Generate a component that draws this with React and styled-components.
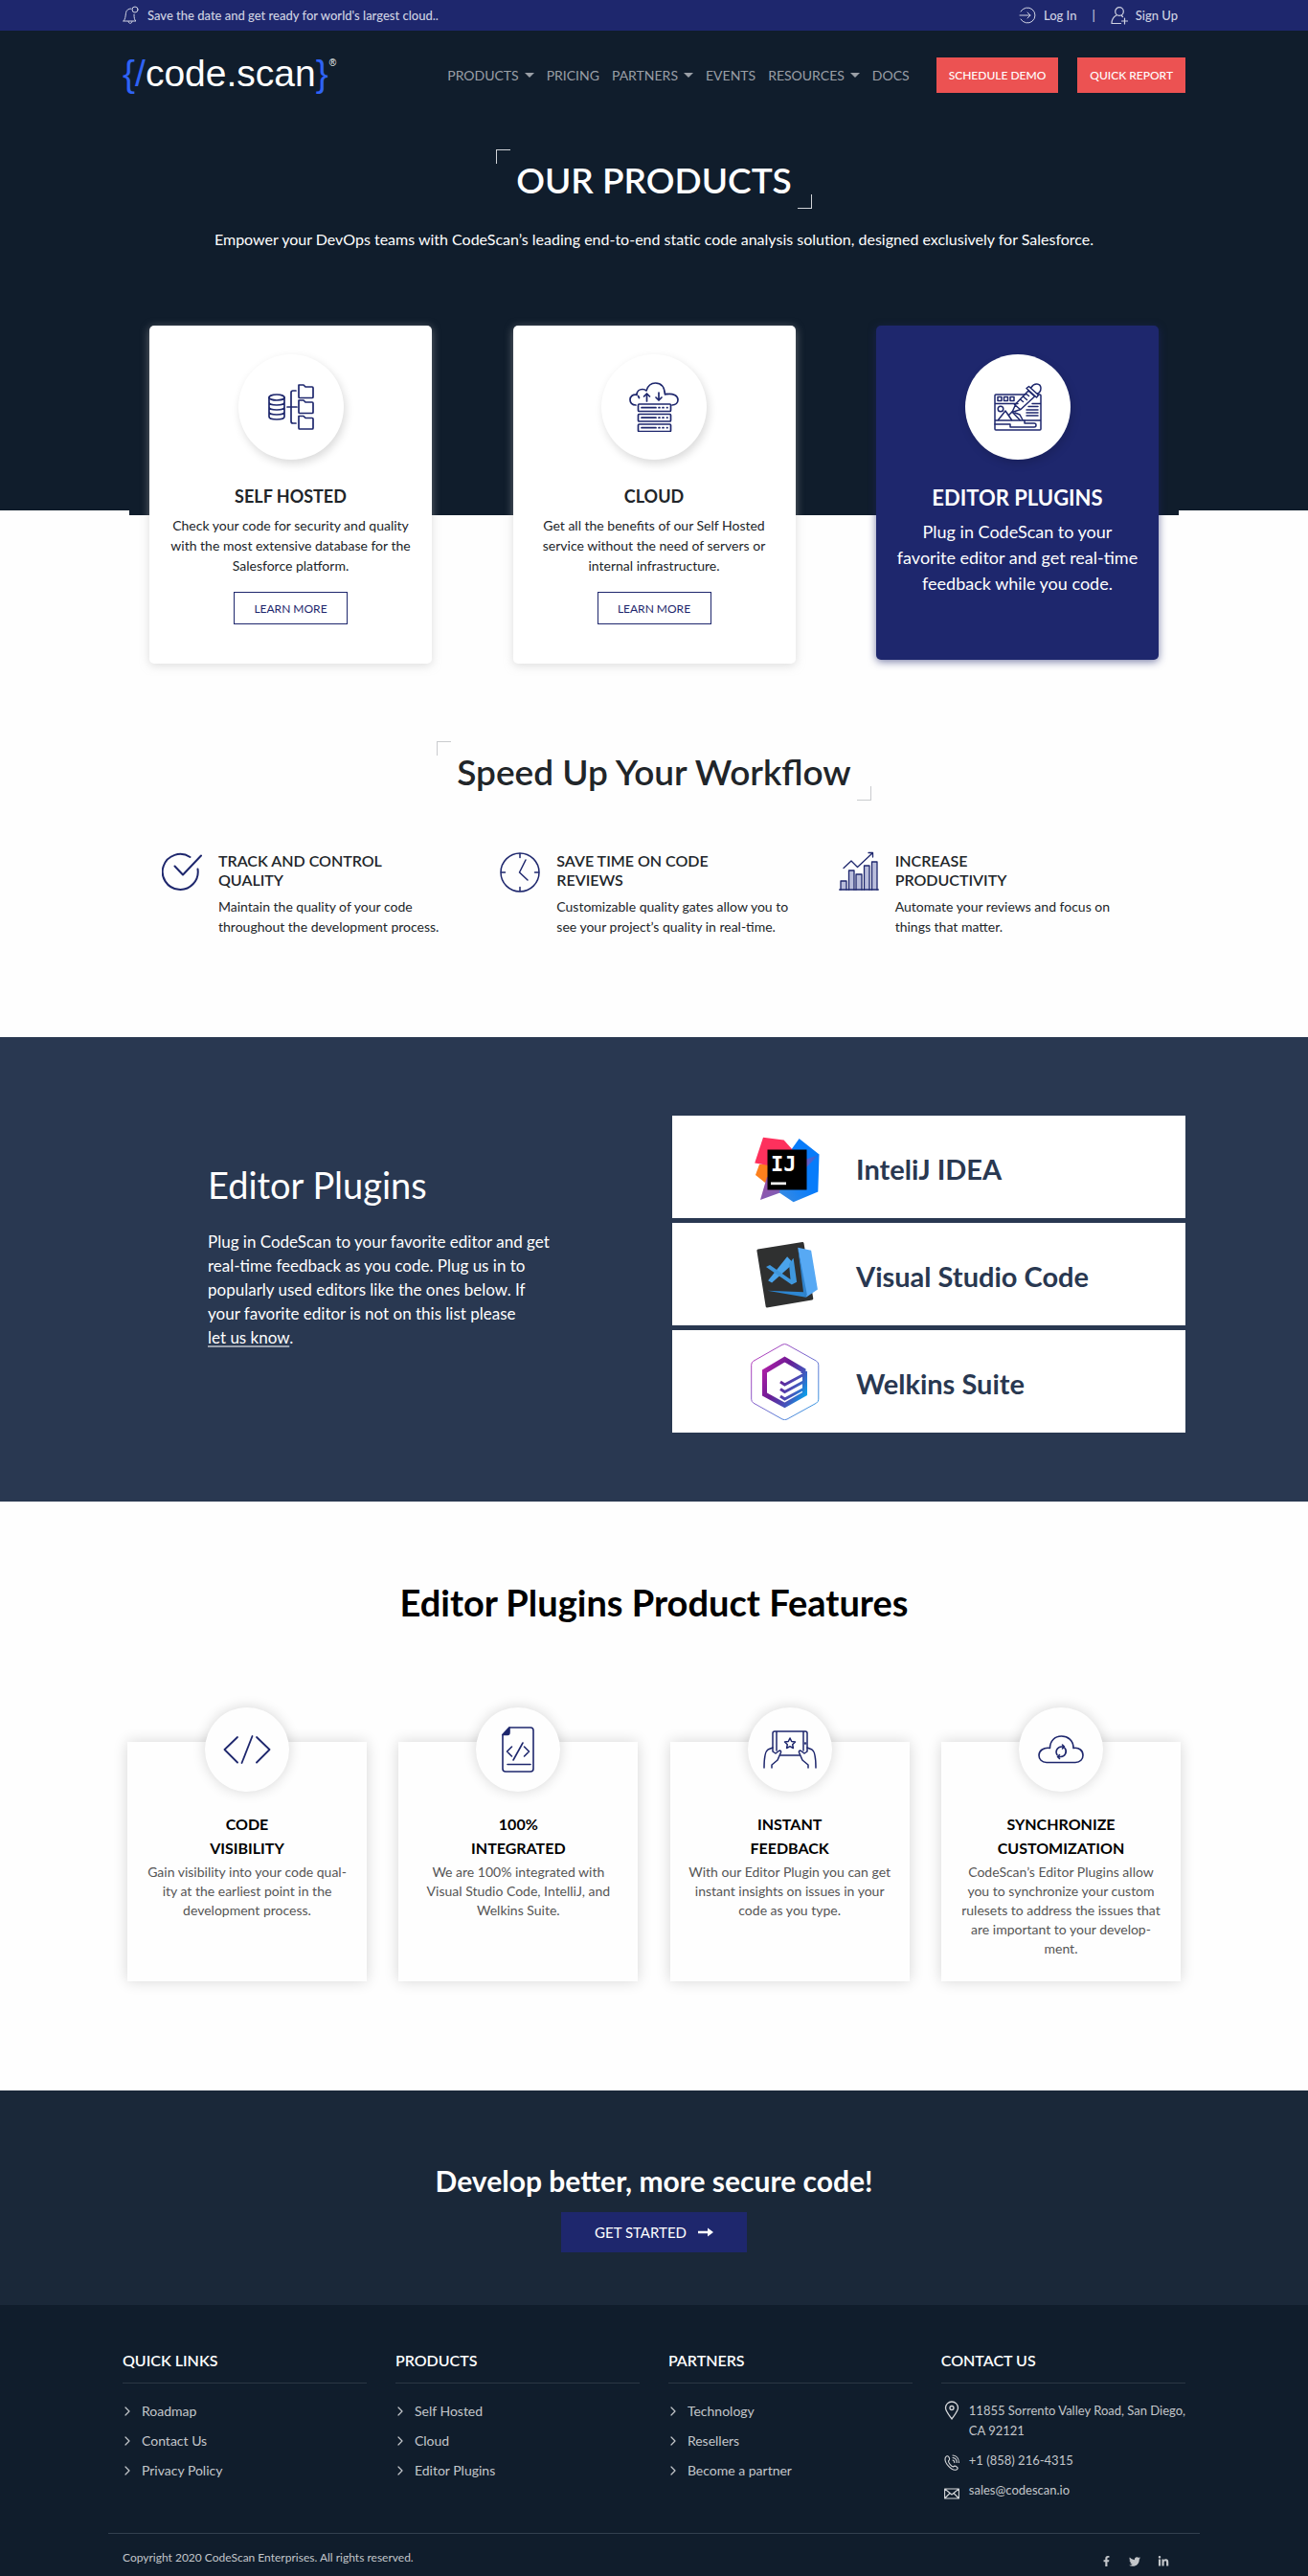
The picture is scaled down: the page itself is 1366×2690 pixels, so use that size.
import React from 'react';
import styled, { createGlobalStyle } from 'styled-components';
import { FaFacebookF, FaTwitter, FaLinkedinIn } from 'react-icons/fa';

const NAVY = '#101d2c';
const INDIGO = '#1e276d';
const SLATE = '#293851';

const GlobalStyle = createGlobalStyle`
  *, *::before, *::after { box-sizing: border-box; }
  body {
    margin: 0;
    background: #fefefe;
    color: #212529;
    font-family: Lato, "Open Sans", sans-serif;
    font-size: 14px;
    line-height: 21px;
  }
  h1, h2, h3, p, ul { margin: 0; padding: 0; }
  ul { list-style: none; }
  a { color: inherit; text-decoration: none; }
  button { font-family: inherit; cursor: pointer; border-radius: 0; }
  svg { display: block; flex: none; }
`;

const Container = styled.div`
  width: 100%;
  max-width: 1140px;
  margin: 0 auto;
  padding: 0 15px;
`;

/* ---------- top bar ---------- */

const TopBar = styled.div`
  background: ${INDIGO};
  color: #cfd2e2;
  font-size: 13px;
  font-weight: 500;
  line-height: 32px;
`;

const TopBarRow = styled(Container)`
  display: flex;
  justify-content: space-between;
`;

const Notice = styled.a`
  display: flex;
  align-items: center;
  gap: 9px;
`;

const Account = styled.div`
  display: flex;
  gap: 16px;
  padding-right: 8px;
`;

const AccountLink = styled.a`
  display: flex;
  align-items: center;
  gap: 8px;
`;

/* ---------- header ---------- */

const Hero = styled.header`
  background: ${NAVY};
  color: #fff;
`;

const HeaderRow = styled(Container)`
  display: flex;
  align-items: center;
  padding-top: 28px;
`;

const Logo = styled.a`
  display: flex;
  height: 37px;
  color: #fff;
  font: 39px/34px "Liberation Sans", Arial, sans-serif;
`;

const LogoMark = styled.span`
  color: #2f63f5;
`;

const Registered = styled.sup`
  padding-left: 1px;
  font-size: 10px;
  line-height: 12px;
`;

const Nav = styled.nav`
  display: flex;
  gap: 13px;
  margin-left: auto;
  padding-right: 28px;
  color: #9a9fa6;
`;

const NavLink = styled.a`
  display: flex;
  align-items: center;
  gap: 6px;

  ${({ $menu }) => $menu && `
    &::after {
      content: "";
      border: 5px solid transparent;
      border-top-color: currentColor;
      border-bottom: 0;
    }
  `}
`;

const HeaderActions = styled.div`
  display: flex;
  gap: 20px;
`;

const ActionButton = styled.button`
  height: 37px;
  padding: 0 13px;
  border: 0;
  background: #ec5252;
  color: #fff;
  font-size: 12px;
  font-weight: 500;
`;

/* ---------- headings ---------- */

const CenterRow = styled.div`
  display: flex;
  justify-content: center;
  padding-top: ${({ $top }) => $top}px;
`;

const BracketTitle = styled.h2`
  position: relative;
  padding: 9px 21px 7px;
  font-size: 37px;
  font-weight: 600;
  line-height: 46px;

  &::before, &::after {
    content: "";
    position: absolute;
    width: 15px;
    height: 15px;
    border: 0 solid ${({ $line }) => $line};
  }
  &::before { top: 0; left: 0; border-width: 1px 0 0 1px; }
  &::after { right: 0; bottom: 0; border-width: 0 1px 1px 0; }
`;

const Lead = styled.p`
  padding: 20px 15px 78px;
  font-size: 16px;
  line-height: 24px;
  text-align: center;
`;

/* ---------- product cards ---------- */

const CardBand = styled.section`
  background: linear-gradient(${NAVY} 193px, transparent 193px);
`;

const CardStrip = styled.div`
  max-width: 1096px;
  margin: 0 auto;
  padding: 0 21px;
  display: flex;
  justify-content: space-between;
  align-items: flex-start;
  background: linear-gradient(${NAVY} 198px, transparent 198px);
`;

const ProductCard = styled.article`
  display: flex;
  flex-direction: column;
  align-items: center;
  width: 295px;
  min-height: ${({ $active }) => ($active ? 349 : 353)}px;
  padding: 30px 20px;
  border-radius: 5px;
  background: ${({ $active }) => ($active ? INDIGO : '#fff')};
  color: ${({ $active }) => ($active ? '#fff' : '#212529')};
  box-shadow: ${({ $active }) => ($active ? '0 2px 8px rgba(30, 39, 109, 0.6)' : '0 2px 10px rgba(190, 190, 190, 0.5)')};
  text-align: center;
`;

const IconDisc = styled.div`
  display: grid;
  place-items: center;
  width: 110px;
  height: 110px;
  border-radius: 50%;
  background: #fff;
  box-shadow: 2px 4px 10px rgba(0, 0, 0, 0.15);
`;

const ProductTitle = styled.h3`
  margin: 26px 0 8px;
  font-size: ${({ $active }) => ($active ? 22 : 18)}px;
  font-weight: 700;
  line-height: ${({ $active }) => ($active ? 28 : 24)}px;
`;

const ProductText = styled.p`
  font-size: ${({ $active }) => ($active ? 18 : 14)}px;
  line-height: ${({ $active }) => ($active ? 27 : 21)}px;
`;

const LearnMore = styled.button`
  width: 119px;
  height: 34px;
  margin-top: 17px;
  border: 1px solid ${INDIGO};
  background: transparent;
  color: ${INDIGO};
  font-size: 12px;
`;

/* ---------- workflow ---------- */

const BenefitRow = styled.div`
  display: grid;
  grid-template-columns: repeat(3, 1fr);
  max-width: 1060px;
  margin: 0 auto;
  padding: 53px 0 105px;
`;

const Benefit = styled.article`
  display: flex;
  gap: 17px;
  padding: 0 16px;
`;

const BenefitTitle = styled.h3`
  margin-bottom: 7px;
  font-size: 16px;
  font-weight: 600;
  line-height: 20px;
`;

const BenefitText = styled.p`
  max-width: 250px;
`;

/* ---------- editor plugins ---------- */

const PluginSection = styled.section`
  padding: 82px 0 72px;
  background: ${SLATE};
  color: #fff;
`;

const PluginRow = styled(Container)`
  display: flex;
  justify-content: space-between;
`;

const PluginIntro = styled.div`
  width: 454px;
  padding: 49px 0 0 89px;
`;

const PluginTitle = styled.h2`
  margin-bottom: 24px;
  font-size: 38px;
  font-weight: 400;
  line-height: 46px;
`;

const PluginText = styled.p`
  font-size: 17px;
  line-height: 25px;
`;

const KnowLink = styled.a`
  text-decoration: underline 2px #9aa1ae;
  text-decoration-skip-ink: none;
  text-underline-offset: 2px;
`;

const NoWrap = styled.span`
  white-space: nowrap;
`;

const PluginList = styled.ul`
  display: grid;
  gap: 5px;
  width: 536px;
`;

const PluginItem = styled.li`
  display: flex;
  align-items: center;
  gap: 38px;
  height: 107px;
  padding-left: 82px;
  background: #fff;
  color: ${SLATE};
`;

const PluginName = styled.h3`
  padding-top: 4px;
  font-size: 29px;
  font-weight: 700;
  line-height: 36px;
`;

/* ---------- features ---------- */

const FeatureSection = styled.section`
  padding: 82px 0 114px;
`;

const FeatureHeading = styled.h2`
  color: #000;
  font-size: 38px;
  font-weight: 700;
  line-height: 46px;
  text-align: center;
`;

const FeatureRow = styled.div`
  display: flex;
  justify-content: space-between;
  max-width: 1100px;
  margin: 0 auto;
  padding-top: 123px;
`;

const FeatureCard = styled.article`
  display: flex;
  flex-direction: column;
  align-items: center;
  width: 250px;
  min-height: 250px;
  padding: 0 18px;
  background: #fefefe;
  box-shadow: 0 0 14px rgba(0, 0, 0, 0.16);
  text-align: center;
`;

const FeatureDisc = styled(IconDisc)`
  width: 88px;
  height: 88px;
  margin-top: -36px;
  background: #fefefe;
  box-shadow: 0 0 14px rgba(0, 0, 0, 0.16);
`;

const FeatureTitle = styled.h3`
  margin: 21px 0 3px;
  color: #000;
  font-size: 16px;
  font-weight: 700;
  line-height: 25px;
`;

const FeatureText = styled.p`
  color: #555;
  line-height: 20px;
`;

/* ---------- call to action ---------- */

const CallToAction = styled.section`
  display: flex;
  flex-direction: column;
  align-items: center;
  gap: 15px;
  padding: 76px 15px 55px;
  background: #1a2839;
  color: #fff;
`;

const CallTitle = styled.h2`
  font-size: 30px;
  font-weight: 700;
  line-height: 36px;
`;

const StartButton = styled.button`
  display: flex;
  align-items: center;
  gap: 12px;
  height: 42px;
  padding: 0 35px;
  border: 0;
  background: ${INDIGO};
  color: #fff;
  font-size: 15px;
`;

/* ---------- footer ---------- */

const Footer = styled.footer`
  padding-top: 46px;
  background: ${NAVY};
  color: #c3c6ca;
`;

const FooterGrid = styled(Container)`
  display: grid;
  grid-template-columns: repeat(4, 1fr);
  gap: 30px;
`;

const FooterTitle = styled.h3`
  padding-bottom: 11px;
  border-bottom: 1px solid #2b3744;
  color: #fff;
  font-size: 16px;
  font-weight: 600;
  line-height: 24px;
`;

const FooterList = styled.ul`
  display: grid;
  gap: 10px;
  padding-top: 18px;
`;

const FooterLink = styled.a`
  display: flex;
  align-items: center;
  gap: 12px;
  padding-left: 2px;
`;

const ContactItem = styled.li`
  display: flex;
  gap: 10px;
  padding-left: 3px;
  font-size: 13px;
  white-space: nowrap;
`;

const Legal = styled.div`
  display: flex;
  justify-content: space-between;
  align-items: flex-end;
  max-width: 1140px;
  margin: 34px auto 0;
  padding: 14px 15px 9px;
  border-top: 1px solid #33404e;
  font-size: 12px;
`;

const Social = styled.div`
  display: flex;
  gap: 18px;
  padding-right: 17px;
`;

/* ---------- drawings ---------- */

function Line({ w, h, color = INDIGO, stroke = 1.5, children }) {
  return (
    <svg width={w} height={h} viewBox={`0 0 ${w} ${h}`} fill="none" stroke={color} strokeWidth={stroke}
      strokeLinecap="round" strokeLinejoin="round" aria-hidden="true">
      {children}
    </svg>
  );
}

const BellIcon = () => (
  <Line w={17} h={20} color="#cfd2e2" stroke={1}>
    <path d="M1 16h13c-1.500-1-2-3-2-7M1 16c2-2 2-5 2.500-8.500C4 4.500 6 3 9 3M6 16.500c0 2.500 4 2.500 4 0" />
    <circle cx="13" cy="4" r="3" />
  </Line>
);

const LoginIcon = () => (
  <Line w={18} h={18} color="#cfd2e2" stroke={1}>
    <path d="M2 5a8 8 0 1 1 0 8M1 9h11M9 6l3 3-3 3" />
  </Line>
);

const UserPlusIcon = () => (
  <Line w={18} h={19} color="#cfd2e2" stroke={1.2}>
    <circle cx="9" cy="5" r="4.300" />
    <path d="M6 9c-3 1.500-5 4-5 8.500h9.500M11.500 9.500l1 1M14.500 12v6M11.500 15h6" />
  </Line>
);

const Folder = ({ y }) => (
  <path d={`M32 ${y}h5l2 2h7a1 1 0 0 1 1 1v9.500a1 1 0 0 1-1 1H33a1 1 0 0 1-1-1z`} />
);

const SelfHostedIcon = () => (
  <Line w={48} h={48} stroke={1.7}>
    <ellipse cx="9" cy="14" rx="8" ry="3" />
    <path d="M1 14v20c0 4 16 4 16 0V14M1 19c0 4 16 4 16 0M1 24c0 4 16 4 16 0M1 29c0 4 16 4 16 0" />
    <path d="M29 7h-3q-2 0-2 2v30q0 2 2 2h3M20 24h10" />
    <Folder y={1} />
    <Folder y={17} />
    <Folder y={33.500} />
  </Line>
);

const CloudIcon = () => (
  <Line w={52} h={52} stroke={1.7}>
    <path d="M7 24C3 24 1 21.500 1 18.500c0-3.500 3-6 7-5.200C8 10 10.500 7.500 14 7.500c1.500 0 3 .5 4 1.500 1.500-5 5-8 9.500-8C33 1 37 5 37.500 13c1-.5 2-.7 3-.4M39 12.600c7-1 12 1.400 12 6 0 3-2.500 5.400-6 5.400M9.500 14.500 10.500 16.500" />
    <path d="M18.500 20v-8M15.500 15l3-3 3 3M31 11v8M28 16l3 3 3-3" />
    {[23, 33.5, 44].map((y) => (
      <g key={y}>
        <rect x="9.500" y={y} width="34" height="7.500" rx="1" />
        <path d={`M13 ${y + 3.7}h15M31 ${y + 3.7}h1M35 ${y + 3.7}h1M39.500 ${y + 3.7}h.5`} />
      </g>
    ))}
  </Line>
);

const EditorIcon = () => (
  <Line w={50} h={50} stroke={1.5}>
    <path d="M33 12H2a1 1 0 0 0-1 1v35a1 1 0 0 0 1 1h46a1 1 0 0 0 1-1V13a1 1 0 0 0-1-1h-2M1 21.500h24M40 21.500h9M1 39h48" />
    <path d="M4 14.500h4v4H4zM10.500 14.500h4v4h-4zM17 14.500h4v4h-4z" />
    <circle cx="7" cy="27" r="2.800" />
    <path d="M4.500 38.500 12 29l6.500 9.500M16 33l3-3 8 8.500M22 31l5 2 3 5.500" />
    <path d="M36 24.500h10M34 28h12M34 31h12M34 34h12M1 43h16v3h25a2 2 0 0 0 0-4H32v-3" />
    <path d="m19 30.500 4-9L36 8l6.500 6-14.500 13.500zM21.500 22.500l6 5M34 5.500l10.500 9.500 2-2.500L36.500 3.500zM39 4.500c3-5 9.500-4.500 10 .5 0 3-1.500 5.500-4 6M28 17.500l2.500 2M31 14.500l3.500 3M34 11.500l2.500 2" />
  </Line>
);

const TrackIcon = () => (
  <Line w={42} h={42} stroke={2}>
    <path d="M29.500 6a18.500 18.500 0 1 0 8 12.500M13.500 15.500l8.500 9L41 4.500" />
  </Line>
);

const ClockIcon = () => (
  <Line w={42} h={43} stroke={1.5}>
    <circle cx="21" cy="22" r="20" />
    <path d="M21 2.500v4M21 37.500v4M1.500 22h4M36.500 22h4M27 9l-6.500 13 8.500 8" />
  </Line>
);

const ChartIcon = () => (
  <Line w={42} h={42} stroke={1.300}>
    <g fill="#b9bddb">
      <path d="M2 40v-9h6v9M10.500 40v-20h5.500v20M18 40v-16h6v16M26.500 40v-25H32v25M34.500 40v-29H40v29" />
    </g>
    <path d="M.7 40h40.600M5 17.500l8-7.500 6.500 6.500L35 2M31 1.500h4.500v4.500" />
  </Line>
);

const CodeIcon = () => (
  <Line w={50} h={30} stroke={1.8}>
    <path d="M15 2 1.500 15 15 28.500M35 2l13.500 13L35 28.500M30.500 1l-11 28" />
  </Line>
);

const CodeFileIcon = () => (
  <Line w={34} h={48} stroke={1.6}>
    <path d="M1 8.500V44q0 3 3 3h26q3 0 3-3V4q0-3-3-3H8z" />
    <path d="M1 8.500h5Q8 8.500 8 6V1z" fill={INDIGO} />
    <path d="m10.500 21-5 5 5 5M23.500 21l5 5-5 5M22 17l-10 18M6 39.500h24" />
  </Line>
);

const TabletIcon = () => (
  <Line w={56} h={40} stroke={1.500}>
    <path d="M10 18V3q0-2 2-2h32q2 0 2 2v15M18 26h20M14 1v20M42 1v20" />
    <path d="m28 8 1.700 3.500 3.800.5-2.800 2.700.7 3.800-3.400-1.800-3.400 1.800.7-3.800-2.800-2.700 3.800-.5z" />
    <path d="M1 39c0-9 1-17 4-19l5-2v4l3 2 4-3q2 0 1.500 2L15 31l-6 5v3M55 39c0-9-1-17-4-19l-5-2v4l-3 2-4-3q-2 0-1.500 2l3.500 8 6 5v3" />
    <circle cx="44" cy="13.500" r=".5" />
  </Line>
);

const CloudSyncIcon = () => (
  <Line w={48} h={30} stroke={1.600}>
    <path d="M9 28.500h30c5 0 8-3.500 8-7.500 0-5-4-8.500-10-7.500C37 5 31 1 24.500 1 17.500 1 12.500 6 12.500 13.500 6 12.500 1 16 1 21c0 4 3 7.500 8 7.500z" />
    <path d="M20 20.500a5.500 5.500 0 0 1 4.500-8.500h2.500M28 13.500a5.500 5.500 0 0 1-4.500 9H21M25.500 10l2 2-2 2M22.500 20.500l-2 2 2 2" />
  </Line>
);

const ArrowIcon = () => (
  <svg width="16" height="10" viewBox="0 0 16 10" fill="#fff" aria-hidden="true">
    <path d="M0 3.700h10V.5L16 5l-6 4.500V6.300H0z" />
  </svg>
);

const ChevronIcon = () => (
  <Line w={6} h={10} color="#c3c6ca" stroke={1.200}>
    <path d="m1 1 4 4-4 4" />
  </Line>
);

const PinIcon = () => (
  <Line w={16} h={21} color="#d5d7da" stroke={1.300}>
    <path d="M8 19C4 13.500 1.500 10.500 1.500 7.500a6.500 6.500 0 0 1 13 0C14.500 10.500 12 13.500 8 19z" />
    <circle cx="8" cy="7.500" r="2" />
  </Line>
);

const PhoneIcon = () => (
  <Line w={16} h={21} color="#d5d7da" stroke={1.100}>
    <path d="M1.500 7C3 5 4.500 5.500 5.500 8c.5 1.500 0 2-1 3 0 2 3 5.500 5 6 1-1 2-1.300 3.200-.3 1.800 1.300 2 2 .6 3C8.500 22.500-1 12.500 1.500 7z" />
    <path d="M9 10c1 .3 1.800 1.200 1.800 2.500M9 7.500c2.500.3 4.200 2.200 4.200 5M9 5c4 .3 6.400 3.500 6.400 7.500" />
  </Line>
);

const MailIcon = () => (
  <Line w={16} h={21} color="#d5d7da" stroke={1.100}>
    <path d="M.6 9h14.800v10H.6zM.6 9 8 15l7.400-6M.6 19l5.400-5.500M15.400 19 10 13.500" />
  </Line>
);

const IntellijLogo = () => (
  <svg width="72" height="80" viewBox="0 0 72 80" aria-hidden="true">
    <defs>
      <linearGradient id="ij-blue" x1="0" y1="1" x2="1" y2="0">
        <stop offset="0" stopColor="#3d8ce0" />
        <stop offset=".5" stopColor="#087cfa" />
      </linearGradient>
      <linearGradient id="ij-wedge" x1="0" y1="0" x2="1" y2="0">
        <stop offset="0" stopColor="#9b4fa8" />
        <stop offset="1" stopColor="#0f73ee" />
      </linearGradient>
      <linearGradient id="ij-tail" x1="0" y1="0" x2="1" y2="1">
        <stop offset="0" stopColor="#a24fa0" />
        <stop offset="1" stopColor="#6f63c0" />
      </linearGradient>
    </defs>
    <path d="M9 37 5 48l10 8 6-4V37z" fill="#fc801d" />
    <path d="m17 50-7 24 22-8 10-14z" fill="url(#ij-tail)" />
    <path d="M50.600 10 71.500 26.500 70.300 65.500 44.600 76.200 30 66.500 36 30 42.400 21.500z" fill="url(#ij-blue)" />
    <path d="M71.500 26.500 52 46v-12z" fill="url(#ij-wedge)" />
    <path d="m13 8.800 21.600 2.700 9 10L30 40 4.200 35.500z" fill="#fe315d" />
    <path d="M17.500 21.500h41v42h-41z" />
    <path d="M21 55.500h16v2.700H21z" fill="#fff" />
    <text x="21" y="44" fill="#fff" fontFamily="DejaVu Sans Mono, monospace" fontSize="22" fontWeight="700">IJ</text>
  </svg>
);

const VsCodeLogo = () => (
  <svg width="72" height="80" viewBox="0 0 72 80" aria-hidden="true">
    <path d="m7.500 13.500 46.500-7.400q1.300 0 1.500 1.200L65.300 65q0 1.300-1.200 1.500L17 74.500q-1 0-1.300-1L6.400 15q0-1.200 1.100-1.500z" fill="#2f3030" />
    <path d="m49.200 11.800 8.600 52 12.100-8.300-6.800-40.700z" fill="#57a9f4" />
    <path d="m17.400 56.800 38 1.500 2.400 5.500z" fill="#2d87d3" />
    <path d="m49.200 11.800 6 48 2.600 4 1-3z" fill="#2f82cc" />
    <path d="m38.100 21.200-20 25 4 2.300 19-17 1-6z" fill="#4aa3ea" />
    <path d="m16 32 4-2 21.500 15L40 29l4.600-6.200 3.500 25-5.300 2.700z" fill="#3f97dd" />
  </svg>
);

const WelkinsLogo = () => (
  <svg width="72" height="80" viewBox="0 0 72 80" fill="none" aria-hidden="true">
    <defs>
      <linearGradient id="wk-edge" x1="0" y1="0" x2="1" y2="1">
        <stop offset="0" stopColor="#c32fb5" />
        <stop offset="1" stopColor="#2ba3e6" />
      </linearGradient>
      <linearGradient id="wk-core" x1="12" y1="25" x2="60" y2="52" gradientUnits="userSpaceOnUse">
        <stop offset="0" stopColor="#b31fa8" />
        <stop offset=".4" stopColor="#6a1c94" />
        <stop offset=".75" stopColor="#4257bd" />
        <stop offset="1" stopColor="#06a6ee" />
      </linearGradient>
    </defs>
    <path d="M33 1.200q2.500-1.300 5 0l30.500 17q2.300 1.500 2.300 4v36q0 2.500-2.300 4L38 79q-2.500 1.300-5 0L3 62.200Q.7 60.700.7 58.200v-36q0-2.500 2.300-4z" stroke="url(#wk-edge)" />
    <path d="M55 31V28L35.500 16.500 14.500 29v24l21 11.500 21-12V29" stroke="url(#wk-core)" strokeWidth="5" />
    <path d="m31 40 4.500 3L56 32M31 47.500l4.500 3L56 39.500M31 55l4.500 3L56 47" stroke="url(#wk-core)" strokeWidth="3" />
  </svg>
);

/* ---------- content ---------- */

const navigation = [
  ['PRODUCTS', true], ['PRICING', false], ['PARTNERS', true],
  ['EVENTS', false], ['RESOURCES', true], ['DOCS', false],
];

const products = [
  { title: 'SELF HOSTED', icon: <SelfHostedIcon />, text: 'Check your code for security and quality with the most extensive database for the Salesforce platform.' },
  { title: 'CLOUD', icon: <CloudIcon />, text: 'Get all the benefits of our Self Hosted service without the need of servers or internal infrastructure.' },
  { title: 'EDITOR PLUGINS', icon: <EditorIcon />, text: 'Plug in CodeScan to your favorite editor and get real-time feedback while you code.', active: true },
];

const benefits = [
  { lines: ['TRACK AND CONTROL', 'QUALITY'], icon: <TrackIcon />, text: 'Maintain the quality of your code throughout the development process.' },
  { lines: ['SAVE TIME ON CODE', 'REVIEWS'], icon: <ClockIcon />, text: 'Customizable quality gates allow you to see your project’s quality in real-time.' },
  { lines: ['INCREASE', 'PRODUCTIVITY'], icon: <ChartIcon />, text: 'Automate your reviews and focus on things that matter.' },
];

const plugins = [
  ['InteliJ IDEA', <IntellijLogo />],
  ['Visual Studio Code', <VsCodeLogo />],
  ['Welkins Suite', <WelkinsLogo />],
];

const features = [
  { lines: ['CODE', 'VISIBILITY'], icon: <CodeIcon />, text: 'Gain visibility into your code qual\u00ADity at the earliest point in the development process.' },
  { lines: ['100%', 'INTEGRATED'], icon: <CodeFileIcon />, text: 'We are 100% integrated with Visual Studio Code, IntelliJ, and Welkins Suite.' },
  { lines: ['INSTANT', 'FEEDBACK'], icon: <TabletIcon />, text: 'With our Editor Plugin you can get instant insights on issues in your code as you type.' },
  { lines: ['SYNCHRONIZE', 'CUSTOMIZATION'], icon: <CloudSyncIcon />, text: 'CodeScan’s Editor Plugins allow you to synchronize your custom rulesets to address the issues that are important to your develop\u00ADment.' },
];

const footerColumns = [
  ['QUICK LINKS', ['Roadmap', 'Contact Us', 'Privacy Policy']],
  ['PRODUCTS', ['Self Hosted', 'Cloud', 'Editor Plugins']],
  ['PARTNERS', ['Technology', 'Resellers', 'Become a partner']],
];

const TwoLines = ({ lines }) => (
  <>
    {lines[0]}
    <br />
    {lines[1]}
  </>
);

export default function App() {
  return (
    <>
      <GlobalStyle />
      <TopBar>
        <TopBarRow>
          <Notice href="#cloud"><BellIcon />Save the date and get ready for world's largest cloud..</Notice>
          <Account>
            <AccountLink href="#login"><LoginIcon />Log In</AccountLink>
            <span>|</span>
            <AccountLink href="#signup"><UserPlusIcon />Sign Up</AccountLink>
          </Account>
        </TopBarRow>
      </TopBar>

      <Hero>
        <HeaderRow>
          <Logo href="#home">
            <LogoMark>{'{/'}</LogoMark>
            code.scan
            <LogoMark>{'}'}</LogoMark>
            <Registered>®</Registered>
          </Logo>
          <Nav>
            {navigation.map(([label, menu]) => (
              <NavLink key={label} href={`#${label.toLowerCase()}`} $menu={menu}>{label}</NavLink>
            ))}
          </Nav>
          <HeaderActions>
            <ActionButton type="button">SCHEDULE DEMO</ActionButton>
            <ActionButton type="button">QUICK REPORT</ActionButton>
          </HeaderActions>
        </HeaderRow>
        <CenterRow $top={59}>
          <BracketTitle as="h1" $line="#d0d3d7">OUR PRODUCTS</BracketTitle>
        </CenterRow>
        <Lead>
          Empower your DevOps teams with CodeScan’s leading end-to-end static code analysis solution, designed exclusively for Salesforce.
        </Lead>
      </Hero>

      <CardBand>
        <CardStrip>
          {products.map(({ title, icon, text, active }) => (
            <ProductCard key={title} $active={active}>
              <IconDisc>{icon}</IconDisc>
              <ProductTitle $active={active}>{title}</ProductTitle>
              <ProductText $active={active}>{text}</ProductText>
              {!active && <LearnMore type="button">LEARN MORE</LearnMore>}
            </ProductCard>
          ))}
        </CardStrip>
      </CardBand>

      <section>
        <CenterRow $top={81}>
          <BracketTitle $line="#c9cbce">Speed Up Your Workflow</BracketTitle>
        </CenterRow>
        <BenefitRow>
          {benefits.map(({ lines, icon, text }) => (
            <Benefit key={lines[0]}>
              {icon}
              <div>
                <BenefitTitle><TwoLines lines={lines} /></BenefitTitle>
                <BenefitText>{text}</BenefitText>
              </div>
            </Benefit>
          ))}
        </BenefitRow>
      </section>

      <PluginSection>
        <PluginRow>
          <PluginIntro>
            <PluginTitle>Editor Plugins</PluginTitle>
            <PluginText>
              Plug in CodeScan to your favorite editor and get real-time feedback as you code. Plug us in to popularly used
              editors like the ones below. If your favorite editor is not on this list please{' '}
              <NoWrap><KnowLink href="#contact">let us know</KnowLink>.</NoWrap>
            </PluginText>
          </PluginIntro>
          <PluginList>
            {plugins.map(([name, logo]) => (
              <PluginItem key={name}>
                {logo}
                <PluginName>{name}</PluginName>
              </PluginItem>
            ))}
          </PluginList>
        </PluginRow>
      </PluginSection>

      <FeatureSection>
        <FeatureHeading>Editor Plugins Product Features</FeatureHeading>
        <FeatureRow>
          {features.map(({ lines, icon, text }) => (
            <FeatureCard key={lines[0]}>
              <FeatureDisc>{icon}</FeatureDisc>
              <FeatureTitle><TwoLines lines={lines} /></FeatureTitle>
              <FeatureText>{text}</FeatureText>
            </FeatureCard>
          ))}
        </FeatureRow>
      </FeatureSection>

      <CallToAction>
        <CallTitle>Develop better, more secure code!</CallTitle>
        <StartButton type="button">GET STARTED<ArrowIcon /></StartButton>
      </CallToAction>

      <Footer>
        <FooterGrid>
          {footerColumns.map(([title, links]) => (
            <div key={title}>
              <FooterTitle>{title}</FooterTitle>
              <FooterList>
                {links.map((label) => (
                  <li key={label}><FooterLink href="#footer"><ChevronIcon />{label}</FooterLink></li>
                ))}
              </FooterList>
            </div>
          ))}
          <div>
            <FooterTitle>CONTACT US</FooterTitle>
            <FooterList>
              <ContactItem><PinIcon /><span>11855 Sorrento Valley Road, San Diego,<br />CA 92121</span></ContactItem>
              <ContactItem><PhoneIcon /><a href="tel:+18582164315">+1 (858) 216-4315</a></ContactItem>
              <ContactItem><MailIcon /><a href="mailto:sales@codescan.io">sales@codescan.io</a></ContactItem>
            </FooterList>
          </div>
        </FooterGrid>
        <Legal>
          <span>Copyright 2020 CodeScan Enterprises. All rights reserved.</span>
          <Social>
            <a href="#facebook" aria-label="Facebook"><FaFacebookF size={11} /></a>
            <a href="#twitter" aria-label="Twitter"><FaTwitter size={12} /></a>
            <a href="#linkedin" aria-label="LinkedIn"><FaLinkedinIn size={12} /></a>
          </Social>
        </Legal>
      </Footer>
    </>
  );
}
